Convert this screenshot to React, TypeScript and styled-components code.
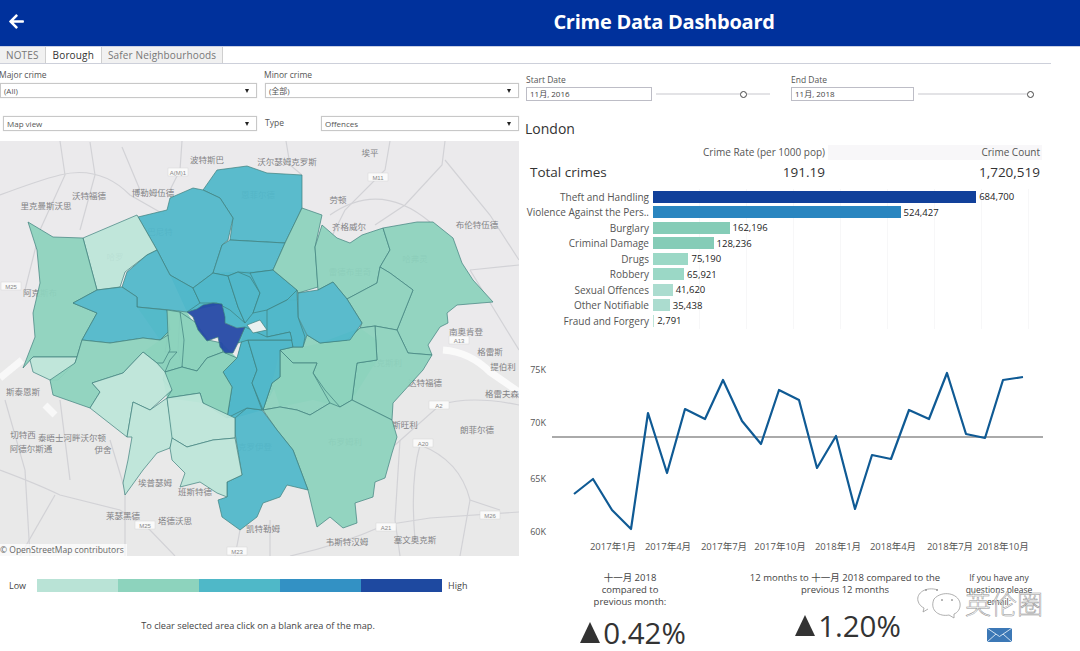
import React from "react";
import styled, { createGlobalStyle } from "styled-components";
import { FaArrowLeft } from "react-icons/fa";

const GlobalStyle = createGlobalStyle`
  html, body {
    margin: 0;
    padding: 0;
    background: #fff;
  }
  body {
    font-family: "Open Sans", "Noto Sans CJK SC", sans-serif;
    color: #444;
  }
`;

const Page = styled.div`
  width: 1080px;
  height: 651px;
  overflow: hidden;
  position: relative;
  background: #fff;
`;

const Header = styled.header`
  box-sizing: border-box;
  height: 47px;
  padding-bottom: 4px;
  background: #00319c;
  color: #fff;
  display: grid;
  grid-template-columns: 248px 832px;
  align-items: center;
  border-bottom: 1px solid #c9d0e4;
`;

const BackButton = styled.div`
  padding-left: 8px;
  display: flex;
  align-items: center;
`;

const Title = styled.h1`
  margin: 0;
  font-size: 20px;
  font-weight: 700;
  text-align: center;
  letter-spacing: -0.25px;
`;

const TabBar = styled.nav`
  box-sizing: border-box;
  display: flex;
  height: 17px;
  width: 1051px;
  border-bottom: 1px solid #cdd0da;
`;

const Tab = styled.div<{ $active?: boolean }>`
  box-sizing: border-box;
  height: 16px;
  padding: 0 ${({ $active }) => ($active ? "7px" : "6px")};
  font-size: 10px;
  line-height: 16px;
  letter-spacing: 0.15px;
  white-space: nowrap;
  color: ${({ $active }) => ($active ? "#333" : "#777")};
  background: ${({ $active }) => ($active ? "#fff" : "#f1f1f1")};
  border-right: 1px solid #cfcfcf;
`;

const Main = styled.main`
  display: grid;
  grid-template-columns: 519px 555px;
  column-gap: 6px;
`;

const LeftColumn = styled.section`
  display: flex;
  flex-direction: column;
`;

const FilterGrid = styled.div`
  box-sizing: border-box;
  display: grid;
  grid-template-columns: 257px 254px;
  column-gap: 8px;
  padding-top: 5px;
  height: 72px;
  align-content: start;
`;

const FilterLabel = styled.div`
  font-size: 8.5px;
  line-height: 12px;
  height: 14px;
  margin-left: -1px;
  color: #555;
  white-space: nowrap;
`;

const Dropdown = styled.div<{ $width?: number; $inset?: number }>`
  box-sizing: border-box;
  height: 15px;
  width: ${({ $width }) => ($width ? `${$width}px` : "auto")};
  margin-left: ${({ $inset }) => $inset || 0}px;
  border: 1px solid #c8c8c8;
  box-shadow: 0 0 1px #ddd;
  background: #fff;
  font-size: 8px;
  line-height: 13px;
  color: #555;
  padding: 0 7px 0 3px;
  display: flex;
  justify-content: space-between;
  align-items: center;
  white-space: nowrap;
`;

const Caret = styled.span`
  width: 0;
  height: 0;
  border-left: 2.5px solid transparent;
  border-right: 2.5px solid transparent;
  border-top: 4px solid #222;
`;

const SecondRow = styled.div`
  margin-top: 18px;
`;

const TypeRow = styled.div`
  margin-top: 18px;
  display: flex;
  align-items: center;
  justify-content: space-between;
`;

const TypeLabel = styled.span`
  font-size: 8.5px;
  color: #555;
  margin-bottom: 3px;
`;

const MapFrame = styled.div`
  position: relative;
  height: 415px;
  margin-top: 5px;
  background: #ebeaec;
`;

const MapDrawing = styled.svg`
  display: block;
  width: 519px;
  height: 415px;
`;

const Attribution = styled.div`
  position: absolute;
  left: 0;
  bottom: 0;
  height: 12px;
  padding-right: 3px;
  font-size: 8.5px;
  line-height: 12px;
  color: #666;
  background: rgba(255, 255, 255, 0.7);
`;

const LegendRow = styled.div`
  display: flex;
  align-items: center;
  padding-left: 9px;
  margin-top: 23px;
  height: 13px;
  font-size: 9px;
  color: #444;
`;

const LegendScale = styled.div`
  display: flex;
  width: 405px;
  height: 13px;
  margin: 0 6px 0 11px;
`;

const LegendStep = styled.div<{ $color: string }>`
  flex: 1;
  background: ${({ $color }) => $color};
`;

const MapHint = styled.p`
  margin: 28px 0 0;
  text-align: center;
  width: 516px;
  font-size: 9.2px;
  line-height: 12px;
  color: #444;
`;

const RightColumn = styled.section`
  display: flex;
  flex-direction: column;
`;

const DateRow = styled.div`
  display: grid;
  grid-template-columns: 265px 265px;
  padding: 9px 0 0 1px;
`;

const DateField = styled.div``;

const DateLabel = styled.div`
  font-size: 8.5px;
  line-height: 13px;
  color: #555;
`;

const DateControls = styled.div`
  display: flex;
  align-items: center;
  margin-top: 1px;
`;

const DateInput = styled.div<{ $width: number }>`
  box-sizing: border-box;
  width: ${({ $width }) => $width}px;
  height: 14px;
  border: 1px solid #bdbdc6;
  font-size: 8px;
  line-height: 12px;
  padding-left: 3px;
  color: #444;
`;

const Slider = styled.div<{ $width: number; $gap: number }>`
  display: flex;
  align-items: center;
  width: ${({ $width }) => $width}px;
  margin-left: ${({ $gap }) => $gap}px;
`;

const SliderTrack = styled.div<{ $tail?: boolean }>`
  height: 2px;
  background: #e3e3e6;
  flex: ${({ $tail }) => ($tail ? "0 0 auto" : "1")};
  width: ${({ $tail }) => ($tail ? "23px" : "auto")};
`;

const SliderThumb = styled.div`
  box-sizing: border-box;
  flex: none;
  width: 7px;
  height: 7px;
  border: 1px solid #444;
  border-radius: 50%;
  background: #fff;
`;

const AreaName = styled.h2`
  margin: 19px 0 0;
  font-size: 14px;
  line-height: 18px;
  font-weight: 400;
  color: #333;
`;

const StatsHead = styled.div`
  display: grid;
  grid-template-columns: 300px 217px;
  height: 15px;
  margin-top: 7px;
  font-size: 10px;
  line-height: 15px;
  color: #555;
  text-align: right;
`;

const CountHead = styled.div`
  background: #f8f7f9;
  padding-right: 2px;
  margin-left: 3px;
`;

const StatsRow = styled.div`
  display: grid;
  grid-template-columns: 300px 215px;
  height: 19px;
  margin-top: 3px;
  font-size: 13.5px;
  line-height: 19px;
  color: #333;
  text-align: right;
`;

const StatsTitle = styled.div`
  display: flex;
  justify-content: space-between;
  padding-left: 5px;
`;

const BarList = styled.div`
  margin-top: 7px;
  background-image: repeating-linear-gradient(
    to right,
    transparent 0,
    transparent 46px,
    #f7f7f8 46px,
    #f7f7f8 47px
  );
  background-position: 128px 0;
  background-size: 380px 100%;
  background-repeat: no-repeat;
`;

const BarRow = styled.div`
  display: flex;
  align-items: center;
  height: 15.5px;
`;

const BarLabel = styled.div`
  width: 124px;
  flex: none;
  text-align: right;
  font-size: 10px;
  color: #555;
  white-space: nowrap;
`;

const Bar = styled.div<{ $color: string }>`
  height: 12px;
  margin-left: 4px;
  background: ${({ $color }) => $color};
`;

const BarValue = styled.div`
  margin-left: 3px;
  font-size: 9.5px;
  color: #222;
`;

const ChartDrawing = styled.svg`
  display: block;
  width: 555px;
  height: 210px;
  margin-top: 21px;
  font-family: "Open Sans", "Noto Sans CJK SC", sans-serif;
`;

const KpiRow = styled.div`
  display: grid;
  grid-template-columns: 210px 220px 88px;
  margin-top: 12px;
`;

const Kpi = styled.div`
  text-align: center;
  font-size: 9.5px;
  line-height: 12px;
  color: #444;
`;

const KpiValue = styled.div<{ $top: number }>`
  margin-top: ${({ $top }) => $top}px;
  font-size: 29.5px;
  line-height: 30px;
  color: #333;
  white-space: nowrap;
  display: flex;
  justify-content: center;
  align-items: center;
  gap: 3px;
  padding-left: 6px;
`;

const TriangleUp = styled.span`
  width: 0;
  height: 0;
  border-left: 10.5px solid transparent;
  border-right: 10.5px solid transparent;
  border-bottom: 21px solid #333;
`;

const ContactNote = styled.div`
  text-align: center;
  font-size: 8.5px;
  line-height: 12px;
  color: #444;
`;

const MailIcon = styled.svg`
  display: block;
  margin: 20px auto 0;
  width: 25px;
  height: 14px;
`;

const Watermark = styled.div`
  position: absolute;
  left: 916px;
  top: 587px;
  display: flex;
  align-items: center;
  gap: 1px;
`;

const WatermarkText = styled.span`
  font-family: "Noto Sans CJK SC", sans-serif;
  font-size: 26px;
  line-height: 30px;
  font-weight: 300;
  color: #fff;
  -webkit-text-stroke: 0.5px #8f8f8f;
`;

const LIGHT = "#bde5d9";
const GREEN = "#8dd2bd";
const TEAL = "#51b8ca";
const NAVY = "#2448a6";

// Borough outlines traced from the picture, in page pixels
const boroughs: { fill: string; points: string; plain?: boolean }[] = [
  { fill: TEAL, plain: true, points: "170,275 193,288 213,273 273,270 297,290 298,317 307,335 303,347 293,350 280,377 263,410 235,418 227,418 223,372 237,358 245,327 237,328 225,323 222,304 187,312" },
  { fill: GREEN, plain: true, points: "137,307 170,310 187,312 198,330 207,341 222,343 237,358 223,372 232,387 227,418 203,403 167,398 163,380 165,372 143,352 160,340" },
  { fill: GREEN, plain: true, points: "280,350 303,347 320,343 360,328 377,340 377,360 352,400 340,407 313,400 280,407 272,383" },
  { fill: TEAL, points: "217,170 247,166 267,173 302,175 302,208 285,243 230,240 233,218 220,198 203,190" },
  { fill: TEAL, points: "138,217 167,210 170,198 193,188 203,190 220,198 233,218 228,240 222,245 213,273 193,288 170,275 157,250" },
  { fill: TEAL, points: "230,240 285,243 273,270 250,273 238,272 228,276 213,273 222,245" },
  { fill: LIGHT, points: "83,238 137,215 157,250 147,255 125,272 120,287 97,290" },
  { fill: GREEN, points: "28,222 53,237 83,238 97,290 73,303 97,313 82,340 77,357 33,357 23,368 35,337 33,313 40,283 37,250" },
  { fill: TEAL, points: "122,287 127,272 147,255 157,250 170,275 193,288 200,303 187,312 170,310 137,307 137,297" },
  { fill: TEAL, points: "73,303 97,290 122,287 137,297 137,307 167,310 170,330 160,340 143,338 110,343 82,340 97,313" },
  { fill: TEAL, points: "200,303 193,288 213,273 228,276 238,307 245,323 230,310 217,303" },
  { fill: TEAL, points: "228,276 238,272 250,277 260,293 253,313 245,323 238,307" },
  { fill: TEAL, points: "250,273 273,270 297,290 297,300 287,300 267,310 253,313 260,293" },
  { fill: GREEN, points: "273,270 285,243 302,208 322,215 315,247 318,287 298,293 297,290" },
  { fill: GREEN, points: "315,247 322,225 337,238 350,243 362,235 383,228 390,250 380,267 377,283 347,299 333,282 318,290" },
  { fill: GREEN, points: "383,228 417,222 433,222 453,238 462,263 473,280 493,302 457,305 447,313 448,323 440,327 428,345 432,355 408,353 397,330 413,290 390,273 380,267 390,250" },
  { fill: GREEN, points: "347,299 377,283 380,267 390,273 413,290 397,330 375,326 360,328 362,323" },
  { fill: GREEN, points: "375,326 397,330 408,353 432,355 423,370 393,403 392,420 352,400 355,377 357,363 377,360" },
  { fill: GREEN, points: "280,350 293,347 303,347 307,335 320,343 347,340 360,328 375,326 377,360 357,363 355,377 352,400 340,407 325,390 313,373 317,363 293,363" },
  { fill: GREEN, points: "280,350 293,363 317,363 313,373 330,403 310,415 297,410 280,407 263,410 272,383 280,377" },
  { fill: GREEN, points: "263,410 280,407 297,410 310,415 330,403 340,407 352,400 392,420 397,437 392,453 385,478 375,482 373,497 355,503 357,523 343,528 330,517 317,527 312,507 308,490 293,450 277,430" },
  { fill: TEAL, points: "235,418 247,408 262,410 277,430 293,450 308,490 287,485 280,497 263,503 257,517 240,530 222,517 218,500 227,497 227,482 242,475 235,433" },
  { fill: TEAL, points: "248,340 257,370 252,383 262,410 247,408 227,418 232,387 223,372 237,358 242,340" },
  { fill: TEAL, points: "248,340 292,340 293,347 280,350 280,377 272,383 263,410 252,383 257,370" },
  { fill: TEAL, points: "298,293 318,290 333,282 347,299 362,323 350,340 320,343 307,335 298,317" },
  { fill: TEAL, points: "267,310 287,300 297,290 298,317 305,337 303,347 293,347 290,332 267,337" },
  { fill: TEAL, points: "245,327 267,337 290,332 292,340 248,340 238,343" },
  { fill: GREEN, points: "180,312 195,322 208,340 222,343 223,352 207,358 197,371 182,367 178,350" },
  { fill: GREEN, points: "167,310 180,312 184,340 182,367 165,372 170,360 177,352 165,352 168,335" },
  { fill: GREEN, points: "207,358 223,352 237,358 223,372 232,387 227,418 203,403 200,393 167,398 172,390 163,380 165,372 182,367 197,371" },
  { fill: LIGHT, points: "33,357 77,357 75,363 58,380 50,380 33,372 30,360" },
  { fill: GREEN, points: "77,357 75,363 50,380 53,395 90,408 100,392 92,383 123,373 143,352 157,363 163,363 170,350 168,335 160,340 143,338 110,343 82,340" },
  { fill: LIGHT, points: "92,383 100,392 90,408 127,437 133,402 150,410 172,390 165,372 157,363 143,352 123,373" },
  { fill: LIGHT, points: "133,402 150,410 167,398 173,437 170,448 157,453 143,470 125,495 123,483 128,460 132,437 127,437" },
  { fill: LIGHT, points: "167,398 200,393 203,403 235,418 235,438 213,440 187,447 172,438" },
  { fill: LIGHT, points: "170,448 172,438 187,447 213,440 235,438 242,475 227,482 227,497 217,493 200,482 180,487 185,473 172,460" },
  { fill: "#f4f4f2", points: "247,325 260,320 267,330 253,333" },
  { fill: NAVY, points: "187,312 197,309 203,305 213,303 222,304 225,317 225,323 237,328 245,327 238,343 233,353 225,353 220,347 218,337 207,341 198,330 193,317" },
];

const roads = [
  "M0 195 Q40 180 60 175 Q100 165 130 195 L165 215",
  "M60 141 L65 175 L40 230 L25 290",
  "M90 142 L95 175 L80 230",
  "M122 147 L140 190",
  "M182 141 L180 170 L170 190",
  "M286 141 L290 165 L302 175",
  "M390 141 L385 170 L345 210 L330 240",
  "M445 141 L442 165 L405 205 L375 225",
  "M445 160 L490 215 L519 260",
  "M330 215 Q380 180 430 222",
  "M519 265 L470 270",
  "M470 270 L519 350",
  "M0 470 Q40 485 60 495 L120 510 L150 530 L175 556",
  "M55 495 L20 556",
  "M125 485 L125 556",
  "M5 400 L25 470 L30 556",
  "M60 400 L70 480",
  "M110 440 L125 490",
  "M240 530 L235 556",
  "M270 520 L270 556",
  "M290 556 Q340 545 385 525 L430 518 L519 512",
  "M400 440 L395 520 L400 556",
  "M420 445 Q460 460 470 500 L500 510",
  "M519 405 Q470 395 440 405 L395 445",
  "M420 445 Q410 480 415 540",
  "M470 500 L460 556",
];

const placeNames: [string, number, number][] = [
  ["波特斯巴", 207, 163],
  ["沃尔瑟姆克罗斯", 287, 165],
  ["埃平", 370, 156],
  ["布伦特伍德", 477, 228],
  ["沃特福德", 89, 199],
  ["博勒姆伍德", 153, 196],
  ["里克曼斯沃思", 46, 209],
  ["劳顿", 338, 203],
  ["齐格威尔", 349, 230],
  ["阿克斯布", 40, 296],
  ["南奥肯登", 466, 335],
  ["格雷斯", 490, 355],
  ["提伯利", 503, 370],
  ["达特福德", 425, 386],
  ["格雷夫森", 502, 397],
  ["斯泰恩斯", 23, 395],
  ["切特西", 23, 438],
  ["泰晤士河畔沃尔顿", 72, 441],
  ["阿德尔斯通", 31, 452],
  ["伊舍", 103, 453],
  ["埃普瑟姆", 155, 486],
  ["班斯特德", 195, 495],
  ["莱瑟黑德", 123, 519],
  ["塔德沃思", 175, 524],
  ["凯特勒姆", 263, 532],
  ["韦斯特汉姆", 347, 545],
  ["塞文奥克斯", 415, 543],
  ["斯旺利", 405, 428],
  ["朗菲尔德", 477, 433],
  ["恩菲尔德", 258, 198],
  ["哈罗", 115, 260],
  ["巴尼特", 160, 235],
  ["哈弗灵", 415, 262],
  ["雷德布里奇", 350, 275],
  ["贝克斯利", 385, 366],
  ["布罗姆利", 345, 445],
  ["克罗伊登", 255, 450],
];

const roadSigns: [string, number, number][] = [
  ["A(M)1", 178, 172],
  ["M11", 378, 177],
  ["M25", 11, 286],
  ["A13", 459, 340],
  ["A2", 439, 405],
  ["A20", 423, 443],
  ["M25", 145, 525],
  ["A21", 386, 527],
  ["M26", 490, 515],
  ["M23", 237, 551],
];

const crimes: { name: string; value: number; color: string }[] = [
  { name: "Theft and Handling", value: 684700, color: "#11409a" },
  { name: "Violence Against the Pers..", value: 524427, color: "#2a86c0" },
  { name: "Burglary", value: 162196, color: "#85ccb7" },
  { name: "Criminal Damage", value: 128236, color: "#85ccb7" },
  { name: "Drugs", value: 75190, color: "#9bd8c6" },
  { name: "Robbery", value: 65921, color: "#9bd8c6" },
  { name: "Sexual Offences", value: 41620, color: "#abdccf" },
  { name: "Other Notifiable", value: 35438, color: "#abdccf" },
  { name: "Fraud and Forgery", value: 2791, color: "#bde5d9" },
];

// traced from the monthly series, in chart pixels
const trend = [
  [49, 144], [68, 129], [87, 160], [106, 179], [123, 63], [142, 123], [160, 59], [180, 69],
  [198, 30], [217, 71], [236, 94], [254, 40], [274, 50], [292, 118], [311, 86], [330, 159],
  [347, 105], [366, 109], [384, 60], [404, 69], [422, 23], [441, 84], [460, 88], [478, 30], [498, 27],
];

const yTicks: [string, number][] = [["75K", 23], ["70K", 76], ["65K", 132], ["60K", 185]];
const xTicks: [string, number][] = [
  ["2017年1月", 88], ["2017年4月", 143], ["2017年7月", 199], ["2017年10月", 255],
  ["2018年1月", 313], ["2018年4月", 368], ["2018年7月", 425], ["2018年10月", 478],
];

const legend = ["#b9e3d6", "#8dd3bd", "#4fb8c8", "#3391c4", "#1e49a0"];

const LondonMap = () => (
  <MapDrawing viewBox="0 141 519 415">
    <rect x="0" y="141" width="519" height="415" fill="#ebeaec" />
    <rect x="0" y="360" width="519" height="196" fill="#e9e9e9" />
    <path d="M443 350 Q470 352 490 372 L519 392" fill="none" stroke="#fafafa" strokeWidth="7" />
    <path d="M0 378 L22 360 M45 405 L55 415" fill="none" stroke="#f8f8f8" strokeWidth="7" />
    {roads.map((d) => (
      <path key={d} d={d} fill="none" stroke="#d2d2d6" strokeWidth="1.2" />
    ))}
    {placeNames.map(([name, x, y]) => (
      <text key={name} x={x} y={y} textAnchor="middle" fontSize="8.5" fill="#828285" fontFamily="Noto Sans CJK SC, sans-serif">
        {name}
      </text>
    ))}
    {roadSigns.map(([name, x, y]) => (
      <g key={name + x}>
        <rect x={x - 10} y={y - 4} width="20" height="8" fill="#fafafa" stroke="#d5d5d5" strokeWidth="0.5" />
        <text x={x} y={y + 2.5} textAnchor="middle" fontSize="6" fill="#888" fontFamily="Liberation Sans, sans-serif">
          {name}
        </text>
      </g>
    ))}
    {boroughs.map((b) => (
      <polygon
        key={b.points}
        points={b.points}
        fill={b.fill}
        fillOpacity={b.plain ? 1 : 0.94}
        stroke={b.plain ? "none" : "#3f7f7d"}
        strokeWidth="0.7"
        strokeLinejoin="round"
      />
    ))}
  </MapDrawing>
);

const TrendChart = () => (
  <ChartDrawing viewBox="0 0 555 210">
    <line x1="27" y1="87" x2="518" y2="87" stroke="#aaaaaa" strokeWidth="2" />
    <polyline
      points={trend.map((p) => p.join(",")).join(" ")}
      fill="none"
      stroke="#0f5a94"
      strokeWidth="2.2"
      strokeLinejoin="round"
    />
    {yTicks.map(([label, y]) => (
      <text key={label} x="21" y={y} textAnchor="end" fontSize="9" fill="#555">
        {label}
      </text>
    ))}
    {xTicks.map(([label, x]) => (
      <text key={label} x={x} y="200" textAnchor="middle" fontSize="9.5" fill="#555">
        {label}
      </text>
    ))}
  </ChartDrawing>
);

const WeChatMark = () => (
  <svg width="48" height="32" viewBox="0 0 48 32" fill="none" stroke="#9a9a9a" strokeWidth="0.8">
    <path d="M22 3 C10 -1 0 6 2 14 C3 18 6 20 8 21 L7 25 L12 22" />
    <path d="M18 12 C26 3 42 6 44 16 C45 22 41 26 38 27 L38 31 L33 28 C24 30 13 24 18 12 Z" />
    <circle cx="10" cy="3" r="0.6" fill="#777" />
    <circle cx="21" cy="3" r="0.6" fill="#777" />
    <circle cx="26" cy="13" r="0.6" fill="#777" />
    <circle cx="36" cy="13" r="0.6" fill="#777" />
  </svg>
);

const App: React.FC = () => {
  return (
    <Page>
      <GlobalStyle />
      <Header>
        <BackButton>
          <FaArrowLeft size={17} color="#fff" />
        </BackButton>
        <Title>Crime Data Dashboard</Title>
      </Header>
      <TabBar>
        <Tab>NOTES</Tab>
        <Tab $active>Borough</Tab>
        <Tab>Safer Neighbourhoods</Tab>
      </TabBar>
      <Main>
        <LeftColumn>
          <FilterGrid>
            <div>
              <FilterLabel>Major crime</FilterLabel>
              <Dropdown>
                (All)
                <Caret />
              </Dropdown>
            </div>
            <div>
              <FilterLabel>Minor crime</FilterLabel>
              <Dropdown>
                (全部)
                <Caret />
              </Dropdown>
            </div>
            <SecondRow>
              <Dropdown $inset={3}>
                Map view
                <Caret />
              </Dropdown>
            </SecondRow>
            <TypeRow>
              <TypeLabel>Type</TypeLabel>
              <Dropdown $width={198}>
                Offences
                <Caret />
              </Dropdown>
            </TypeRow>
          </FilterGrid>
          <MapFrame>
            <LondonMap />
            <Attribution>© OpenStreetMap contributors</Attribution>
          </MapFrame>
          <LegendRow>
            Low
            <LegendScale>
              {legend.map((c) => (
                <LegendStep key={c} $color={c} />
              ))}
            </LegendScale>
            High
          </LegendRow>
          <MapHint>To clear selected area click on a blank area of the map.</MapHint>
        </LeftColumn>
        <RightColumn>
          <DateRow>
            <DateField>
              <DateLabel>Start Date</DateLabel>
              <DateControls>
                <DateInput $width={126}>11月, 2016</DateInput>
                <Slider $width={114} $gap={4}>
                  <SliderTrack />
                  <SliderThumb />
                  <SliderTrack $tail />
                </Slider>
              </DateControls>
            </DateField>
            <DateField>
              <DateLabel>End Date</DateLabel>
              <DateControls>
                <DateInput $width={123}>11月, 2018</DateInput>
                <Slider $width={116} $gap={4}>
                  <SliderTrack />
                  <SliderThumb />
                </Slider>
              </DateControls>
            </DateField>
          </DateRow>
          <AreaName>London</AreaName>
          <StatsHead>
            <div>Crime Rate (per 1000 pop)</div>
            <CountHead>Crime Count</CountHead>
          </StatsHead>
          <StatsRow>
            <StatsTitle>
              <span>Total crimes</span>
              <span>191.19</span>
            </StatsTitle>
            <div>1,720,519</div>
          </StatsRow>
          <BarList>
            {crimes.map((c) => (
              <BarRow key={c.name}>
                <BarLabel>{c.name}</BarLabel>
                <Bar $color={c.color} style={{ width: Math.max(1, c.value * 0.000472) }} />
                <BarValue>{c.value.toLocaleString("en-US")}</BarValue>
              </BarRow>
            ))}
          </BarList>
          <TrendChart />
          <KpiRow>
            <Kpi>
              十一月 2018
              <br />
              compared to
              <br />
              previous month:
              <KpiValue $top={10}>
                <TriangleUp />
                0.42%
              </KpiValue>
            </Kpi>
            <Kpi>
              12 months to 十一月 2018 compared to the
              <br />
              previous 12 months
              <KpiValue $top={15}>
                <TriangleUp />
                1.20%
              </KpiValue>
            </Kpi>
            <ContactNote>
              If you have any
              <br />
              questions please
              <br />
              email:
              <MailIcon viewBox="0 0 25 14">
                <rect width="25" height="14" fill="#3c78b6" />
                <path d="M0 0 L12.5 8.5 L25 0 M0 14 L9 6 M25 14 L16 6" fill="none" stroke="#cfe0f0" strokeWidth="1" />
              </MailIcon>
            </ContactNote>
          </KpiRow>
        </RightColumn>
      </Main>
      <Watermark>
        <WeChatMark />
        <WatermarkText>英伦圈</WatermarkText>
      </Watermark>
    </Page>
  );
};

export default App;
